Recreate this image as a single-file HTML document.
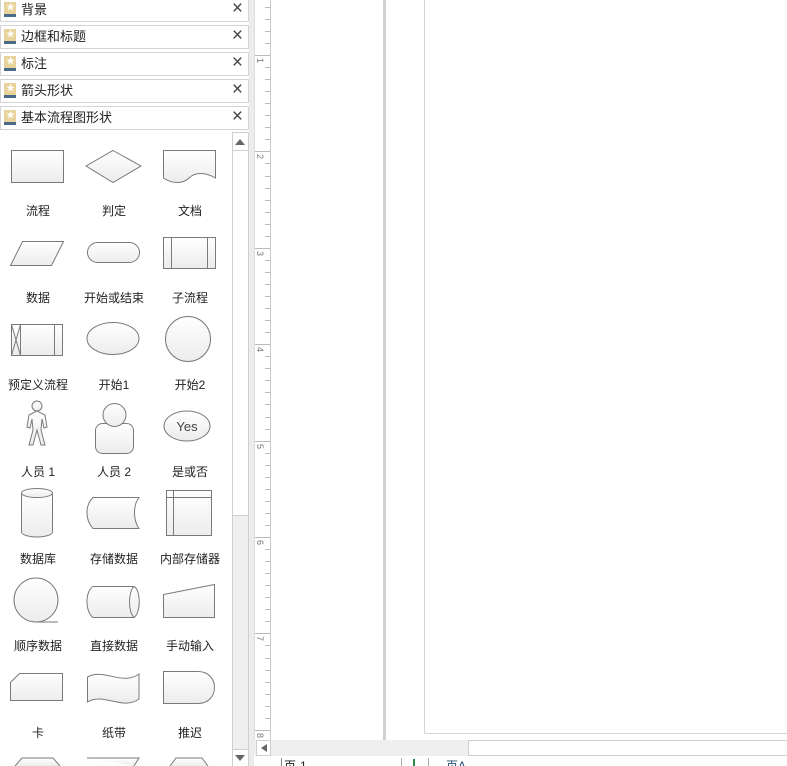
<!DOCTYPE html>
<html><head><meta charset="utf-8"><style>
*{margin:0;padding:0;box-sizing:border-box}
body{width:787px;height:766px;overflow:hidden;background:#fff;position:relative;font-family:"Liberation Sans","Noto Sans CJK SC",sans-serif;font-size:12px;color:#222}
.hdr{position:absolute;left:0;width:249px;height:24px;border:1px solid #d4d4d4;background:#fff}
.hdr .ic{position:absolute;left:3px;top:3px;width:12px;height:14px;background:#e8d39a}
.hdr .ic:after{content:"";position:absolute;left:0;bottom:-1px;width:12px;height:3px;background:#4b6a8a}
.hdr .ic span{position:absolute;left:2px;top:0;font-size:9px;color:#fff;line-height:11px}
.hdr .t{position:absolute;left:20px;top:3px;font-size:13px;line-height:16px}
.hdr .x{position:absolute;right:5px;top:0px;font-size:19px;line-height:20px;color:#444}
.lbl{position:absolute;width:76px;text-align:center;font-size:12px;line-height:14px}
</style></head><body>
<div class="hdr" style="top:-2px"><div class="ic"><span>★</span></div><div class="t">背景</div><div class="x">×</div></div>
<div class="hdr" style="top:25px"><div class="ic"><span>★</span></div><div class="t">边框和标题</div><div class="x">×</div></div>
<div class="hdr" style="top:52px"><div class="ic"><span>★</span></div><div class="t">标注</div><div class="x">×</div></div>
<div class="hdr" style="top:79px"><div class="ic"><span>★</span></div><div class="t">箭头形状</div><div class="x">×</div></div>
<div class="hdr" style="top:106px"><div class="ic"><span>★</span></div><div class="t">基本流程图形状</div><div class="x">×</div></div>

<svg style="position:absolute;left:0;top:0" width="787" height="766">
<defs><linearGradient id="g" x1="0" y1="0" x2="0" y2="1"><stop offset="0" stop-color="#fff"/><stop offset="1" stop-color="#ececec"/></linearGradient></defs>
<g fill="url(#g)" stroke="#7a7a7a" stroke-width="1">
<rect x="11.5" y="150.5" width="52" height="32"/>
<polygon points="113,150.5 141,166 113,182.5 86,166"/>
<path d="M163.5 150.5H215.5V178C205 172 195 172 189 178S172 184 163.5 178Z"/>
<polygon points="10.5,265.5 22.5,241.5 63.5,241.5 51.5,265.5"/>
<rect x="87.5" y="242.5" width="52" height="20" rx="10"/>
<rect x="163.5" y="237.5" width="52" height="31"/><path d="M171.5 237.5V268.5M207.5 237.5V268.5"/>
<rect x="11.5" y="324.5" width="51" height="31"/><path d="M20.5 324.5V355.5M54.5 324.5V355.5M11.5 324.5L20.5 355.5M20.5 324.5L11.5 355.5"/>
<ellipse cx="113" cy="338.5" rx="26" ry="16"/>
<circle cx="188" cy="339" r="22.5"/>
<path d="M37 411L29 415L27 427L30 428L32 419L33 430L29 445L33 445L37 430L41 445L45 445L41 430L42 419L44 428L47 427L45 415Z"/>
<circle cx="37" cy="406" r="5"/>
<rect x="95.5" y="423.5" width="38" height="30" rx="7"/>
<circle cx="114.5" cy="415" r="11.5"/>
<ellipse cx="187" cy="426" rx="23" ry="15"/>
<path d="M21.5 493V532A15.5 5 0 0 0 52.5 532V493"/><ellipse cx="37" cy="493" rx="15.5" ry="4.5"/>
<path d="M93 497.5H139C133 505 133 520 139 528.5H93C85 520 85 505 93 497.5Z"/>
<rect x="166.5" y="490.5" width="45" height="45"/><path d="M173.5 490.5V535.5M166.5 497.5H211.5"/>
<circle cx="36" cy="600" r="22"/><path d="M36 622H58"/>
<path d="M93 586.5H134C141 590 141 613 134 617.5H93C85 612 85 591 93 586.5Z"/><path d="M134 586.5C128 592 128 612 134 617.5"/>
<polygon points="163.5,594.5 214.5,584.5 214.5,617.5 163.5,617.5"/>
<polygon points="19.5,673.5 62.5,673.5 62.5,700.5 10.5,700.5 10.5,682.5"/>
<path d="M87.5 677C104 668 122 686 139 674V699C122 711 104 692 87.5 702Z"/>
<path d="M163.5 671.5H198C220 671.5 220 703.5 198 703.5H163.5Z"/>
<path d="M15 766L22 758H53L60 766M87 758H139L134 766M170 766L176 758H202L208 766"/>
</g>
<text x="187" y="431" text-anchor="middle" font-size="13" fill="#444" font-family="Liberation Sans,sans-serif">Yes</text>
<rect x="232.5" y="132.5" width="16" height="634" fill="#efefef" stroke="#cfcfcf"/>
<rect x="232.5" y="150.5" width="16" height="365" fill="#fff" stroke="#cfcfcf"/>
<rect x="232.5" y="132.5" width="16" height="18" fill="#fff" stroke="#cfcfcf"/>
<polygon points="235,145 245,145 240,139" fill="#666"/>
<rect x="232.5" y="749.5" width="16" height="17" fill="#fff" stroke="#cfcfcf"/>
<polygon points="235,755 245,755 240,761" fill="#666"/>
<rect x="249" y="0" width="5" height="766" fill="#ececec"/>
<rect x="254" y="0" width="16" height="740" fill="#fff"/>
<line x1="254.5" y1="0" x2="254.5" y2="740" stroke="#ddd"/>
<line x1="270.5" y1="0" x2="270.5" y2="740" stroke="#ccc"/>
<g stroke="#bbb" id="ticks"></g>
<rect x="383" y="0" width="3" height="740" fill="#d0d0d0"/>
<line x1="424.5" y1="0" x2="424.5" y2="733" stroke="#d4d4d4"/>
<line x1="424.5" y1="733.5" x2="787" y2="733.5" stroke="#d4d4d4"/>
<rect x="254" y="740" width="533" height="16" fill="#efefef"/>
<rect x="256.5" y="740.5" width="14" height="15" fill="#fff" stroke="#cfcfcf"/>
<polygon points="261,748 267,744 267,752" fill="#666"/>
<rect x="468.5" y="740.5" width="320" height="15" fill="#fff" stroke="#cfcfcf"/>
<rect x="254" y="756" width="533" height="10" fill="#fff"/>
<line x1="281.5" y1="758" x2="281.5" y2="766" stroke="#888"/>
<text x="284" y="770" font-size="12" fill="#222" font-family="Liberation Sans,Noto Sans CJK SC,sans-serif">页-1</text>
<line x1="401.5" y1="758" x2="401.5" y2="766" stroke="#aaa"/>
<rect x="413" y="759" width="2" height="7" fill="#2a8a4a"/>
<line x1="428.5" y1="758" x2="428.5" y2="766" stroke="#aaa"/>
<text x="446" y="770" font-size="12" fill="#2b4f7a" font-family="Liberation Sans,Noto Sans CJK SC,sans-serif">页A</text>
</svg>
<script>
var g=document.getElementById('ticks'),n='http://www.w3.org/2000/svg';
for(var i=-6;i<62;i++){var y=55+i*12.05;if(y<0||y>740)continue;var maj=(i%8==0);
var l=document.createElementNS(n,'line');l.setAttribute('x1',maj?255:265);l.setAttribute('x2',270);l.setAttribute('y1',Math.round(y)+.5);l.setAttribute('y2',Math.round(y)+.5);g.appendChild(l);
if(maj){var t=document.createElementNS(n,'text');t.setAttribute('x',0);t.setAttribute('y',0);t.setAttribute('font-size','9');t.setAttribute('fill','#777');t.setAttribute('stroke','none');t.setAttribute('font-family','Liberation Sans,sans-serif');t.setAttribute('transform','translate(257,'+(Math.round(y)+3)+') rotate(90)');t.textContent=(i/8+1);g.appendChild(t);}}
</script>
<div class="lbl" style="left:0;top:204px">流程</div><div class="lbl" style="left:76px;top:204px">判定</div><div class="lbl" style="left:152px;top:204px">文档</div>
<div class="lbl" style="left:0;top:291px">数据</div><div class="lbl" style="left:76px;top:291px">开始或结束</div><div class="lbl" style="left:152px;top:291px">子流程</div>
<div class="lbl" style="left:0;top:378px">预定义流程</div><div class="lbl" style="left:76px;top:378px">开始1</div><div class="lbl" style="left:152px;top:378px">开始2</div>
<div class="lbl" style="left:0;top:465px">人员 1</div><div class="lbl" style="left:76px;top:465px">人员 2</div><div class="lbl" style="left:152px;top:465px">是或否</div>
<div class="lbl" style="left:0;top:552px">数据库</div><div class="lbl" style="left:76px;top:552px">存储数据</div><div class="lbl" style="left:150px;top:552px;width:80px">内部存储器</div>
<div class="lbl" style="left:0;top:639px">顺序数据</div><div class="lbl" style="left:76px;top:639px">直接数据</div><div class="lbl" style="left:152px;top:639px">手动输入</div>
<div class="lbl" style="left:0;top:726px">卡</div><div class="lbl" style="left:76px;top:726px">纸带</div><div class="lbl" style="left:152px;top:726px">推迟</div>
</body></html>
